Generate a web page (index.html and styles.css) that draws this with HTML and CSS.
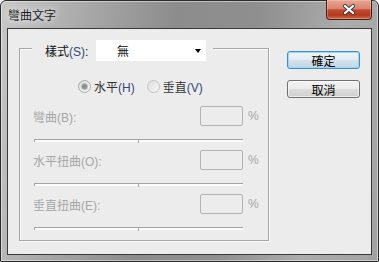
FILE: index.html
```html
<!DOCTYPE html>
<html lang="zh-Hant">
<head>
    <meta charset="UTF-8">
    <title>彎曲文字</title>
    <link rel="stylesheet" href="styles.css">
</head>
<body>
    <div class="window">
        <div class="titlebar">
            <span class="title">彎曲文字</span>
            <button class="close" title="關閉">
                <svg width="14" height="11" viewBox="0 0 14 11">
                    <path d="M3 2 L11 9 M11 2 L3 9" stroke="#3b3b3b" stroke-width="4" stroke-linecap="round"/>
                    <path d="M3 2 L11 9 M11 2 L3 9" stroke="#fff" stroke-width="2.2" stroke-linecap="round"/>
                </svg>
            </button>
        </div>
        <div class="client">
            <div class="group">
                <div class="group-head">
                    <span class="label">樣式<span class="key">(S)</span>:</span>
                    <div class="select">
                        <span>無</span>
                        <span class="arrow"></span>
                    </div>
                </div>
                <div class="orient">
                    <span class="radio checked"></span>
                    <span class="radio-text">水平<span class="key">(H)</span></span>
                    <span class="radio"></span>
                    <span class="radio-text">垂直<span class="key">(V)</span></span>
                </div>
                <div class="param">
                    <div class="param-head">
                        <span class="param-label">彎曲(B):</span>
                        <span class="value"></span>
                        <span class="unit">%</span>
                    </div>
                    <div class="slider"></div>
                </div>
                <div class="param">
                    <div class="param-head">
                        <span class="param-label">水平扭曲(O):</span>
                        <span class="value"></span>
                        <span class="unit">%</span>
                    </div>
                    <div class="slider"></div>
                </div>
                <div class="param">
                    <div class="param-head">
                        <span class="param-label">垂直扭曲(E):</span>
                        <span class="value"></span>
                        <span class="unit">%</span>
                    </div>
                    <div class="slider"></div>
                </div>
            </div>
            <div class="actions">
                <button class="btn default">確定</button>
                <button class="btn">取消</button>
            </div>
        </div>
    </div>
</body>
</html>
```

FILE: styles.css
```css
body {
    margin: 0;
    font-family: "Liberation Sans", "Noto Sans CJK TC", sans-serif;
    font-size: 12px;
    color: #1a1a1a;
}
.window {
    width: 379px;
    height: 262px;
    box-sizing: border-box;
    display: flex;
    flex-direction: column;
    padding: 0 6px 6px;
    border: 1px solid #2b2b2b;
    border-radius: 6px 6px 1px 1px;
    background: linear-gradient(100deg, #c8c8c8 0%, #a6a6a6 22%, #8c8c8c 42%, #8f8f8f 62%, #acacac 82%, #a2a2a2 100%);
    box-shadow: inset 0 0 0 1px rgba(255, 255, 255, 0.45);
}
.titlebar {
    height: 27px;
    display: flex;
    align-items: center;
    justify-content: space-between;
}
.title {
    margin-left: 1px;
    color: #1e1e1e;
    text-shadow: 0 0 6px rgba(255, 255, 255, 0.8), 0 0 10px rgba(255, 255, 255, 0.6);
}
.close {
    align-self: flex-start;
    margin-top: -1px;
    width: 46px;
    height: 20px;
    padding: 0;
    display: flex;
    align-items: center;
    justify-content: center;
    border: 1px solid #4a1f17;
    border-top: none;
    border-radius: 0 0 4px 4px;
    background: linear-gradient(#e7a796 0%, #d98470 45%, #c04a30 52%, #b7381f 80%, #cf6a4c 100%);
    box-shadow: inset 0 0 0 1px rgba(255, 210, 190, 0.35);
}
.client {
    flex: 1;
    display: flex;
    align-items: flex-start;
    padding: 19px 0 0 11px;
    border: 1px solid #3a3a3a;
    background: #ececec;
}
.group {
    width: 250px;
    height: 193px;
    box-sizing: border-box;
    border: 1px solid #a5a5a5;
    box-shadow: inset 1px 1px 0 #fafafa, 1px 1px 0 #fafafa;
}
.group-head {
    width: fit-content;
    height: 21px;
    display: flex;
    align-items: center;
    gap: 5px;
    margin: -9px 0 0 12px;
    padding: 0 7px 0 13px;
    background: #ececec;
}
.label {
    min-width: 46px;
    color: #111;
}
.key {
    color: #33457a;
}
.select {
    width: 110px;
    height: 21px;
    box-sizing: border-box;
    display: flex;
    align-items: center;
    justify-content: space-between;
    padding: 0 5px 0 21px;
    background: #fff;
    color: #111;
}
.arrow {
    border-top: 4px solid #000;
    border-left: 3px solid transparent;
    border-right: 3px solid transparent;
}
.orient {
    height: 16px;
    display: flex;
    align-items: center;
    margin: 17px 0 0 58px;
    color: #333;
}
.radio {
    width: 13px;
    height: 13px;
    box-sizing: border-box;
    border: 1px solid #c4c4c4;
    border-radius: 50%;
    background: linear-gradient(135deg, #dcdcdc, #f7f7f7);
    display: flex;
    align-items: center;
    justify-content: center;
}
.radio.checked {
    border-color: #a8a8a8;
}
.radio.checked::after {
    content: "";
    width: 5px;
    height: 5px;
    border-radius: 50%;
    background: #8e8e8e;
    box-shadow: 0 0 0 1px #bdbdbd;
}
.radio-text {
    margin: 0 12px 0 3px;
}
.param {
    margin-top: 8px;
}
.orient + .param {
    margin-top: 12px;
}
.param-head {
    height: 20px;
    display: flex;
    align-items: center;
    padding: 0 8px 0 13px;
    color: #a6a6a6;
}
.param-label {
    flex: 1;
}
.value {
    width: 43px;
    height: 20px;
    box-sizing: border-box;
    border: 1px solid #b3b3b3;
    border-radius: 2px;
    background: #ececec;
}
.unit {
    width: 12px;
    margin-left: 5px;
}
.slider {
    position: relative;
    width: 208px;
    height: 2px;
    margin: 13px 0 0 14px;
    border-top: 1px solid #a3a3a3;
    border-left: 1px solid #a3a3a3;
    background: #fbfbfb;
}
.slider::after {
    content: "";
    position: absolute;
    left: 103px;
    top: 0;
    width: 1px;
    height: 3px;
    background: #a3a3a3;
}
.actions {
    display: flex;
    flex-direction: column;
    gap: 11px;
    margin: 3px 0 0 18px;
}
.btn {
    width: 73px;
    height: 18px;
    padding: 0;
    font: inherit;
    color: #000;
    border: 1px solid #707070;
    border-radius: 3px;
    background: linear-gradient(#f2f2f2 0%, #ebebeb 48%, #dddddd 52%, #cfcfcf 100%);
    box-shadow: inset 0 0 0 1px rgba(255, 255, 255, 0.6);
}
.btn.default {
    border-color: #3c8fcf;
    background: linear-gradient(#eef4f8 0%, #e3edf3 48%, #d3e1ea 52%, #c6d6e1 100%);
    box-shadow: inset 0 0 0 1px #9fd6f5;
}
```
